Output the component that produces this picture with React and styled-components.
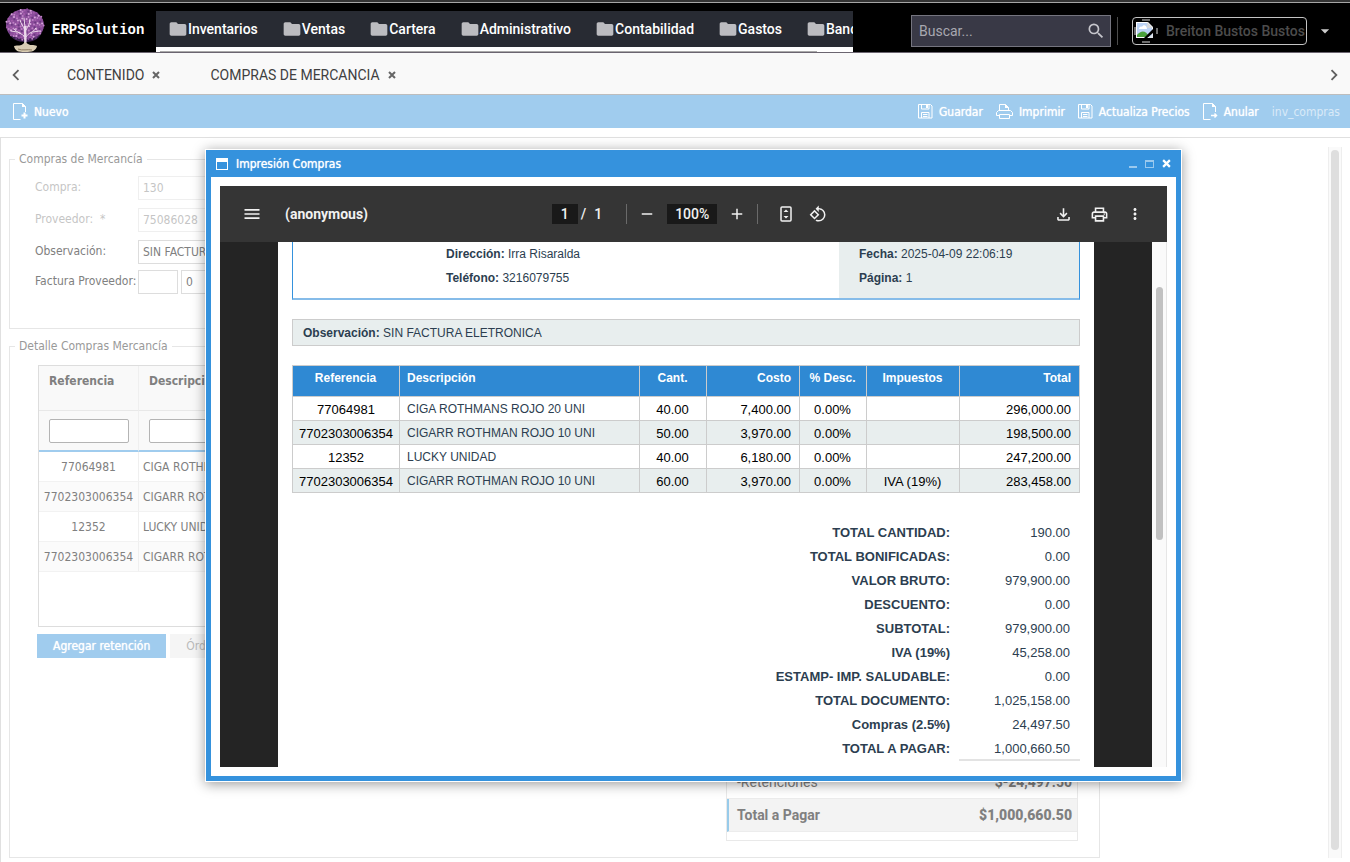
import { Fragment } from 'react';
import styled, { createGlobalStyle, css } from 'styled-components';
import {
  MdAdd,
  MdArrowDropDown,
  MdChevronLeft,
  MdChevronRight,
  MdFolder,
  MdMenu,
  MdMoreVert,
  MdOutlineFileDownload,
  MdOutlinePrint,
  MdRemove,
  MdRotate90DegreesCcw,
  MdSearch,
} from 'react-icons/md';

const uiFont = '"DejaVu Sans Condensed", "DejaVu Sans", sans-serif';
const menus = ['Inventarios', 'Ventas', 'Cartera', 'Administrativo', 'Contabilidad', 'Gastos', 'Bancos'];
const tabs = ['CONTENIDO', 'COMPRAS DE MERCANCIA'];

const items = [
  { ref: '77064981', name: 'CIGA ROTHMANS ROJO 20 UNI', qty: '40.00', cost: '7,400.00', tax: '', total: '296,000.00' },
  { ref: '7702303006354', name: 'CIGARR ROTHMAN ROJO 10 UNI', qty: '50.00', cost: '3,970.00', tax: '', total: '198,500.00' },
  { ref: '12352', name: 'LUCKY UNIDAD', qty: '40.00', cost: '6,180.00', tax: '', total: '247,200.00' },
  { ref: '7702303006354', name: 'CIGARR ROTHMAN ROJO 10 UNI', qty: '60.00', cost: '3,970.00', tax: 'IVA (19%)', total: '283,458.00' },
];

const totals = [
  ['TOTAL CANTIDAD:', '190.00'],
  ['TOTAL BONIFICADAS:', '0.00'],
  ['VALOR BRUTO:', '979,900.00'],
  ['DESCUENTO:', '0.00'],
  ['SUBTOTAL:', '979,900.00'],
  ['IVA (19%)', '45,258.00'],
  ['ESTAMP- IMP. SALUDABLE:', '0.00'],
  ['TOTAL DOCUMENTO:', '1,025,158.00'],
  ['Compras (2.5%)', '24,497.50'],
  ['TOTAL A PAGAR:', '1,000,660.50'],
];

// leaves are spread on a spiral so the crown keeps an even density
const leaves = Array.from({ length: 150 }, (_, i) => {
  const angle = i * 2.4;
  const dist = Math.sqrt(i / 150);
  return {
    x: 20 + Math.cos(angle) * dist * 19,
    y: 17 + Math.sin(angle) * dist * 16,
    fill: ['#a45bab', '#d9a6dc', '#8d4a9c', '#c07fc6', '#6c3780'][(i * 7) % 5],
  };
});

function TreeLogo() {
  return (
    <svg width="40" height="44" viewBox="0 0 40 44" aria-hidden="true">
      <ellipse cx="20" cy="17" rx="19" ry="16" fill="#8a4f9a" />
      <path d="M3 24c5 9 29 9 34 0-3 8-10 10-17 10S6 31 3 24z" fill="#3c2350" />
      {leaves.map((leaf, i) => (
        <circle key={i} cx={leaf.x} cy={leaf.y} r="1" fill={leaf.fill} />
      ))}
      <g fill="none" stroke="#ecd9ea" strokeLinecap="round">
        <path d="M20 38c1-6 0-13 0-19" strokeWidth="2.4" />
        <path d="M20 29c-3-4-8-4-11-8M21 29c3-5 7-4 10-9M20 22c-2-4-4-6-5-10M21 22c2-4 4-6 4-11M12 24l-6-1M28 24l6-1M20 19l-1-9" />
      </g>
      <path d="M9 38c4-1 7 0 9-2l2-2 3 2c3 2 5 0 9 2-1 5-5 6-12 6S10 43 9 38z" fill="#d9cdb4" />
      <path d="M13 41c4 2 10 0 14 1" stroke="#8e7c60" fill="none" />
    </svg>
  );
}

function BrokenAvatar() {
  return (
    <svg width="24" height="24" viewBox="0 0 24 24" aria-hidden="true">
      <path d="M2 3h12l5 5v11H2z" fill="#fff" />
      <path d="M3 4h10v5h5v9H3z" fill="#bcd3f5" />
      <path d="M5 10c0-2 2-3 3-2 1-3 5-2 5 2z" fill="#fff" />
      <path d="M3 18v-2c4-5 9-5 12 2z" fill="#4aa13c" />
      <path d="M13 3v6h6z" fill="#d5d8dc" />
      <path d="M19 10v4l-7 6H9z" fill="#000" />
      <path d="M14 19l5-4v4z" fill="#dfe4ea" />
      <path d="M8 1h8M8 23h8M1 8v8M23 9v6" stroke="#ddd" fill="none" />
    </svg>
  );
}

function NewDocIcon({ arrow }) {
  return (
    <svg width="15" height="17" viewBox="0 0 15 17" fill="none" stroke="currentColor" aria-hidden="true">
      <path d="M7.500 16.500H.5V.5h9l3 3V9" />
      <path d="M9 0l4 4H9z" fill="currentColor" stroke="none" />
      {arrow ? (
        <path d="M8 12.500h5M11.500 10.500l2 2-2 2" strokeWidth="1.500" />
      ) : (
        <path d="M11.500 9.500v6M8.500 12.500h6" strokeWidth="2" />
      )}
    </svg>
  );
}

function SaveIcon() {
  return (
    <svg width="15" height="15" viewBox="0 0 15 15" fill="none" stroke="currentColor" aria-hidden="true">
      <path d="M.5.5h12l1.500 1.500v12H.5zM3.500.5v4.500h7.500V.5M3.500 14V8.500h7.500V14M5 10.500h4.500M5 12.500h4.500" />
      <path d="M8 1h2v3H8z" fill="currentColor" stroke="none" />
    </svg>
  );
}

function PrintIcon() {
  return (
    <svg width="17" height="15" viewBox="0 0 17 15" fill="none" stroke="currentColor" aria-hidden="true">
      <path d="M3.500 7V.5h6l3 3V7M3.500 11.500h-3v-3l2-2h12l2 2v3h-3M3.500 10.500h10v4h-10z" />
      <path d="M9 0l4 4H9z" fill="currentColor" stroke="none" />
    </svg>
  );
}

function FitIcon() {
  return (
    <svg width="12" height="16" viewBox="0 0 12 16" aria-hidden="true">
      <rect x="1" y="1" width="10" height="14" rx="1" fill="none" stroke="currentColor" strokeWidth="1.500" />
      <path d="M6 3.500l2.500 2.500h-5zM6 12.500L3.500 10h5z" fill="currentColor" />
    </svg>
  );
}

function CloseMark({ size = 8 }) {
  return (
    <svg width={size} height={size} viewBox="0 0 8 8" aria-hidden="true">
      <path d="M1 1l6 6M7 1L1 7" stroke="currentColor" strokeWidth="2" />
    </svg>
  );
}

function App() {
  return (
    <>
      <GlobalStyle />
      <Page>
        <Header>
          <Brand href="#">
            <TreeLogo />
            ERPSolution
          </Brand>
          <NavScroller>
            <Nav>
              {menus.map((menu) => (
                <NavLink href="#" key={menu}>
                  <MdFolder size={20} />
                  {menu}
                </NavLink>
              ))}
            </Nav>
            <NavTrack>
              <NavThumb />
            </NavTrack>
          </NavScroller>
          <SearchBox>
            <input type="text" placeholder="Buscar..." aria-label="Buscar" />
            <MdSearch size={20} />
          </SearchBox>
          <UserArea>
            <UserButton type="button">
              <BrokenAvatar />
              <span>Breiton Bustos Bustos</span>
            </UserButton>
            <CaretButton type="button" aria-label="Abrir menú de usuario">
              <MdArrowDropDown size={20} />
            </CaretButton>
          </UserArea>
        </Header>

        <TabBar>
          <ArrowButton type="button" aria-label="Anterior">
            <MdChevronLeft size={22} />
          </ArrowButton>
          {tabs.map((tab) => (
            <Tab key={tab}>
              <button type="button">{tab}</button>
              <button type="button" aria-label={`Cerrar ${tab}`}>
                <CloseMark />
              </button>
            </Tab>
          ))}
          <ArrowButton type="button" aria-label="Siguiente" $last>
            <MdChevronRight size={22} />
          </ArrowButton>
        </TabBar>

        <Toolbar>
          <ToolButton type="button">
            <NewDocIcon />
            Nuevo
          </ToolButton>
          <ToolGroup>
            <ToolButton type="button">
              <SaveIcon />
              Guardar
            </ToolButton>
            <ToolButton type="button">
              <PrintIcon />
              Imprimir
            </ToolButton>
            <ToolButton type="button">
              <SaveIcon />
              Actualiza Precios
            </ToolButton>
            <ToolButton type="button">
              <NewDocIcon arrow />
              Anular
            </ToolButton>
            <ModuleName>inv_compras</ModuleName>
          </ToolGroup>
        </Toolbar>

        <Body>
          <FormArea>
            <FieldSet $tall>
              <legend>Compras de Mercancía</legend>
              <FormRows>
                <FormRow $faded>
                  <label htmlFor="compra">Compra:</label>
                  <TextField id="compra" defaultValue="130" disabled />
                </FormRow>
                <FormRow $faded>
                  <label htmlFor="proveedor">Proveedor: &nbsp;*</label>
                  <TextField id="proveedor" defaultValue="75086028" disabled />
                </FormRow>
                <FormRow>
                  <label htmlFor="observacion">Observación:</label>
                  <TextField id="observacion" defaultValue="SIN FACTURA ELETRONICA" />
                </FormRow>
                <FormRow>
                  <label htmlFor="factura">Factura Proveedor:</label>
                  <TextField id="factura" $small />
                  <TextField aria-label="Número de factura" defaultValue="0" />
                </FormRow>
              </FormRows>
            </FieldSet>

            <FieldSet>
              <legend>Detalle Compras Mercancía</legend>
              <GridBox>
                <GridTable>
                  <colgroup>
                    <col className="ref" />
                    <col />
                  </colgroup>
                  <thead>
                    <tr>
                      <th>Referencia</th>
                      <th>Descripción</th>
                    </tr>
                    <tr className="filters">
                      <td>
                        <input type="text" aria-label="Filtrar referencia" />
                      </td>
                      <td>
                        <input type="text" aria-label="Filtrar descripción" />
                      </td>
                    </tr>
                  </thead>
                  <tbody>
                    {items.map((item, i) => (
                      <tr key={i}>
                        <td className="ref">{item.ref}</td>
                        <td>{item.name}</td>
                      </tr>
                    ))}
                  </tbody>
                </GridTable>
              </GridBox>
              <Actions>
                <ActionButton type="button" $primary>Agregar retención</ActionButton>
                <ActionButton type="button">Órdenes</ActionButton>
              </Actions>
              <Summary>
                <SummaryRow>
                  <span>-Retenciones</span>
                  <strong>$-24,497.50</strong>
                </SummaryRow>
                <SummaryRow $total>
                  <span>Total a Pagar</span>
                  <strong>$1,000,660.50</strong>
                </SummaryRow>
              </Summary>
            </FieldSet>
          </FormArea>
          <PageScroll>
            <div />
          </PageScroll>
        </Body>

        <Dialog role="dialog" aria-labelledby="dialog-title">
          <DialogHeader>
            <WindowMark />
            <h2 id="dialog-title">Impresión Compras</h2>
            <DialogButton type="button" aria-label="Minimizar" $dim>
              <MinimizeMark />
            </DialogButton>
            <DialogButton type="button" aria-label="Maximizar" $dim>
              <MaximizeMark />
            </DialogButton>
            <DialogButton type="button" aria-label="Cerrar">
              <CloseMark size={9} />
            </DialogButton>
          </DialogHeader>
          <Viewer>
            <ViewerBar>
              <ViewerGroup>
                <ViewerButton type="button" aria-label="Menú">
                  <MdMenu size={20} />
                </ViewerButton>
                <strong>(anonymous)</strong>
              </ViewerGroup>
              <ViewerGroup $center>
                <ViewerInput $width={26} aria-label="Página" defaultValue="1" />
                <PageCount>
                  <span>/</span>
                  <span>1</span>
                </PageCount>
                <Separator />
                <ViewerButton type="button" aria-label="Alejar">
                  <MdRemove size={18} />
                </ViewerButton>
                <ViewerInput $width={50} aria-label="Zoom" defaultValue="100%" />
                <ViewerButton type="button" aria-label="Acercar">
                  <MdAdd size={18} />
                </ViewerButton>
                <Separator />
                <ViewTools>
                  <ViewerButton type="button" aria-label="Ajustar a la página">
                    <FitIcon />
                  </ViewerButton>
                  <ViewerButton type="button" aria-label="Girar">
                    <MdRotate90DegreesCcw size={18} />
                  </ViewerButton>
                </ViewTools>
              </ViewerGroup>
              <ViewerGroup $end>
                <ViewerButton type="button" aria-label="Descargar">
                  <MdOutlineFileDownload size={19} />
                </ViewerButton>
                <ViewerButton type="button" aria-label="Imprimir">
                  <MdOutlinePrint size={19} />
                </ViewerButton>
                <ViewerButton type="button" aria-label="Más opciones">
                  <MdMoreVert size={18} />
                </ViewerButton>
              </ViewerGroup>
            </ViewerBar>
            <ViewerBody>
              <Paper>
                <DocHeader>
                  <DocInfo>
                    <p><b>Dirección:</b> Irra Risaralda</p>
                    <p><b>Teléfono:</b> 3216079755</p>
                  </DocInfo>
                  <DocMeta>
                    <p><b>Fecha:</b> 2025-04-09 22:06:19</p>
                    <p><b>Página:</b> 1</p>
                  </DocMeta>
                </DocHeader>
                <DocNote><b>Observación:</b> SIN FACTURA ELETRONICA</DocNote>
                <DocTable>
                  <colgroup>
                    <col width="107" />
                    <col />
                    <col width="67" />
                    <col width="93" />
                    <col width="67" />
                    <col width="93" />
                    <col width="120" />
                  </colgroup>
                  <thead>
                    <tr>
                      <th>Referencia</th>
                      <th className="left">Descripción</th>
                      <th>Cant.</th>
                      <th className="right">Costo</th>
                      <th>% Desc.</th>
                      <th>Impuestos</th>
                      <th className="right">Total</th>
                    </tr>
                  </thead>
                  <tbody>
                    {items.map((item, i) => (
                      <tr key={i}>
                        <td className="code">{item.ref}</td>
                        <td className="left">{item.name}</td>
                        <td>{item.qty}</td>
                        <td className="right">{item.cost}</td>
                        <td>0.00%</td>
                        <td>{item.tax}</td>
                        <td className="right">{item.total}</td>
                      </tr>
                    ))}
                  </tbody>
                </DocTable>
                <DocTotals>
                  {totals.map(([label, value]) => (
                    <Fragment key={label}>
                      <dt>{label}</dt>
                      <dd>{value}</dd>
                    </Fragment>
                  ))}
                </DocTotals>
              </Paper>
              <ViewerScroll>
                <div />
              </ViewerScroll>
            </ViewerBody>
          </Viewer>
        </Dialog>
      </Page>
    </>
  );
}

const GlobalStyle = createGlobalStyle`
  * {
    box-sizing: border-box;
  }
  body {
    margin: 0;
    background: #fff;
    font-family: ${uiFont};
    font-size: 12px;
    color: #808080;
  }
  button {
    display: flex;
    align-items: center;
    padding: 0;
    border: 0;
    background: none;
    color: inherit;
    font: inherit;
  }
  input {
    font: inherit;
    color: inherit;
    min-width: 0;
  }
  svg {
    flex: none;
  }
`;

const Page = styled.div`
  position: relative;
  display: flex;
  flex-direction: column;
  min-height: 100vh;
  overflow: hidden;
`;

const Header = styled.header`
  display: flex;
  align-items: center;
  height: 53px;
  padding-top: 8px;
  background: #000;
  border-top: 2px solid #333;
  border-bottom: 1px solid #6b6570;
  box-shadow: inset 0 1px #a5a5a5;
  font-family: Roboto, sans-serif;
  font-size: 14px;
`;

const Brand = styled.a`
  display: flex;
  align-items: center;
  align-self: flex-end;
  gap: 7px;
  flex: 0 0 156px;
  padding-left: 5px;
  color: #fff;
  font: bold 14px "Liberation Mono", monospace;
  text-decoration: none;
`;

const NavScroller = styled.div`
  flex: 1;
  min-width: 0;
  align-self: flex-end;
  margin-right: 58px;
  background: #fff;
`;

const Nav = styled.nav`
  display: flex;
  gap: 24px;
  height: 36px;
  padding-left: 12px;
  overflow: hidden;
  background: #282b33;
`;

const NavLink = styled.a`
  display: flex;
  align-items: center;
  color: #fff;
  font-weight: 500;
  text-decoration: none;
  svg {
    color: #bcbcc0;
  }
`;

const NavTrack = styled.div`
  height: 5px;
  padding: 4px 36px 0 4px;
`;

const NavThumb = styled.div`
  height: 1px;
  background: #aaa;
`;

const SearchBox = styled.label`
  display: flex;
  align-items: center;
  flex: 0 0 200px;
  min-width: 0;
  height: 32px;
  padding: 0 4px 0 7px;
  border: 1px solid #75757f;
  background: #393946;
  color: #c5c5cb;
  input {
    flex: 1;
    padding: 0;
    border: 0;
    outline: 0;
    background: none;
    &::placeholder {
      color: #a8a8b0;
      opacity: 1;
    }
  }
`;

const UserArea = styled.div`
  display: flex;
  align-items: center;
  height: 28px;
  margin-left: 6px;
  padding: 0 15px 0 14px;
  border-left: 1px solid #4c4c4c;
`;

const UserButton = styled.button`
  && {
    gap: 8px;
    width: 175px;
    height: 28px;
    padding-left: 1px;
    border: 1px solid #c4c4c4;
    border-radius: 4px;
    color: #4c4c4c;
    font-weight: 500;
    white-space: nowrap;
    overflow: hidden;
  }
`;

const CaretButton = styled.button`
  && {
    margin-left: 8px;
    color: #ccc;
  }
`;

const TabBar = styled.div`
  display: flex;
  align-items: center;
  height: 42px;
  padding: 2px 5px 0;
  background: #f9f9f9;
  border-bottom: 1px solid #bdbdbd;
  color: #404040;
  font-family: Roboto, sans-serif;
  font-size: 14px;
`;

const ArrowButton = styled.button`
  && {
    margin-left: ${({ $last }) => ($last ? 'auto' : 0)};
    color: #606060;
  }
`;

const Tab = styled.div`
  display: flex;
  align-items: center;
  gap: 8px;
  margin-left: 40px;
  & + & {
    margin-left: 50px;
  }
  svg {
    color: #666;
  }
`;

const Toolbar = styled.div`
  display: flex;
  align-items: center;
  justify-content: space-between;
  height: 33px;
  padding: 0 10px 0 13px;
  background: #a0ccee;
  color: #fff;
`;

const ToolGroup = styled.div`
  display: flex;
  align-items: center;
  gap: 13px;
`;

const ToolButton = styled.button`
  && {
    gap: 6px;
    text-shadow: 0 0 1px #fff;
  }
`;

const ModuleName = styled.span`
  opacity: 0.6;
`;

const Body = styled.main`
  flex: 1;
  display: flex;
  justify-content: space-between;
  margin-top: 9px;
  padding: 9px 8px 5px;
  border-top: 1px solid #e0e0e0;
  border-left: 1px solid #e0e0e0;
`;

const FormArea = styled.div`
  flex: 0 1 1091px;
  min-width: 0;
  padding-top: 4px;
`;

const FieldSet = styled.fieldset`
  min-width: 0;
  margin: 0 0 9px;
  padding: 0 21px 16px 27px;
  border: 1px solid #e6e6e6;
  legend {
    margin-left: -22px;
    padding: 0 4px;
    line-height: 16px;
    color: #999;
  }
  ${({ $tall }) =>
    $tall &&
    css`
      padding-bottom: 34px;
    `}
  &:last-child {
    margin: 0;
  }
`;

const FormRows = styled.div`
  display: flex;
  flex-direction: column;
  gap: 8px;
  padding-top: 9px;
  margin-left: -2px;
`;

const FormRow = styled.div`
  display: flex;
  gap: 3px;
  width: 400px;
  opacity: ${({ $faded }) => ($faded ? 0.45 : 1)};
  label {
    width: 100px;
    line-height: 22px;
    white-space: nowrap;
  }
  &:last-child {
    margin-top: -2px;
  }
`;

const TextField = styled.input.attrs({ type: 'text' })`
  flex: ${({ $small }) => ($small ? '0 0 40px' : '1')};
  height: 24px;
  padding: 0 4px;
  border: 1px solid #ddd;
  background: #fff;
`;

const GridBox = styled.div`
  height: 262px;
  margin: 11px 0 0 1px;
  border: 1px solid #ddd;
`;

const GridTable = styled.table`
  width: 100%;
  table-layout: fixed;
  border-collapse: separate;
  border-spacing: 0;
  col.ref {
    width: 100px;
  }
  th {
    height: 45px;
    padding: 8px 10px;
    background: #f9f9f9;
    border-bottom: 1px solid #e8e8e8;
    text-align: left;
    vertical-align: top;
  }
  th, td {
    border-right: 1px solid #efefef;
  }
  .filters td {
    height: 41px;
    padding: 0 9px 0 10px;
    background: #f9f9f9;
    border-bottom: 2px solid #a0ccee;
  }
  .filters input {
    display: block;
    width: 100%;
    height: 24px;
    border: 1px solid #b4b4b4;
    border-radius: 2px;
    background: #fff;
  }
  tbody td {
    height: 30px;
    padding: 0 4px;
    border-bottom: 1px solid #f2f2f2;
  }
  tbody tr:nth-child(even) {
    background: #fbfbfb;
  }
  td.ref {
    text-align: center;
  }
`;

const Actions = styled.div`
  display: flex;
  gap: 4px;
  margin-top: 7px;
`;

const ActionButton = styled.button`
  && {
    height: 24px;
    padding: 0 16px;
    background: ${({ $primary }) => ($primary ? '#a0ccee' : '#f5f5f5')};
    color: ${({ $primary }) => ($primary ? '#fff' : '#bbb')};
    text-shadow: ${({ $primary }) => ($primary ? '0 0 1px #fff' : 'none')};
  }
`;

const Summary = styled.div`
  width: 352px;
  margin: 107px 0 0 auto;
  padding-bottom: 8px;
  border: 1px solid #e9e9e9;
  font-family: Roboto, sans-serif;
  font-size: 14px;
`;

const SummaryRow = styled.div`
  display: flex;
  align-items: center;
  justify-content: space-between;
  height: 33px;
  padding: 0 5px 0 10px;
  border-bottom: 1px solid #ececec;
  ${({ $total }) =>
    $total &&
    css`
      padding-left: 8px;
      border-left: 2px solid #98cbea;
      background: #f3f3f3;
      font-weight: bold;
    `}
`;

const PageScroll = styled.div`
  display: flex;
  justify-content: center;
  width: 14px;
  padding: 3px 0 8px;
  border-left: 1px solid #eee;
  border-right: 1px solid #eee;
  background: #fafafa;
  div {
    width: 8px;
    border-radius: 4px;
    background: #dedede;
  }
`;

const Dialog = styled.section`
  position: absolute;
  top: 149px;
  left: 205px;
  right: 168px;
  padding: 0 5px 5px;
  border: 1px solid #fff;
  background: #3592dd;
  box-shadow: 0 2px 12px rgba(0, 0, 0, 0.4);
`;

const DialogHeader = styled.header`
  display: flex;
  align-items: center;
  gap: 8px;
  height: 27px;
  padding: 0 5px;
  color: #fff;
  h2 {
    flex: 1;
    margin: 0;
    font-size: 12px;
    font-weight: normal;
    text-shadow: 0 0 1px #fff;
  }
`;

const WindowMark = styled.span`
  width: 12px;
  height: 12px;
  border: 1px solid #fff;
  border-top-width: 4px;
`;

const DialogButton = styled.button`
  && {
    opacity: ${({ $dim }) => ($dim ? 0.5 : 1)};
  }
`;

const MinimizeMark = styled.span`
  width: 8px;
  height: 8px;
  border-bottom: 2px solid #fff;
`;

const MaximizeMark = styled.span`
  width: 9px;
  height: 8px;
  border: 1px solid #fff;
  border-top-width: 2px;
`;

const Viewer = styled.div`
  padding: 9px;
  background: #fff;
`;

const ViewerBar = styled.div`
  display: grid;
  grid-template-columns: 1fr auto 1fr;
  align-items: center;
  height: 56px;
  padding: 0 23px 0 22px;
  background: #353535;
  color: #f1f1f1;
  font-family: Roboto, sans-serif;
  font-size: 14px;
  font-weight: 500;
`;

const ViewerGroup = styled.div`
  display: flex;
  align-items: center;
  gap: ${({ $end }) => ($end ? 17 : 23)}px;
  ${({ $center }) =>
    $center &&
    css`
      gap: 11px;
      margin-right: 7px;
    `}
  ${({ $end }) => $end && 'justify-content: flex-end;'}
`;

const ViewTools = styled.div`
  display: flex;
  gap: 14px;
  margin-left: 8px;
`;

const ViewerButton = styled.button`
  && {
    justify-content: center;
    min-width: 18px;
  }
`;

const ViewerInput = styled.input.attrs({ type: 'text' })`
  width: ${({ $width }) => $width}px;
  height: 20px;
  padding: 0;
  border: 0;
  background: #191919;
  text-align: center;
`;

const PageCount = styled.span`
  display: flex;
  gap: 8px;
  margin: 0 13px 0 -8px;
`;

const Separator = styled.span`
  width: 1px;
  height: 20px;
  background: #6a6a6a;
`;

const ViewerBody = styled.div`
  display: flex;
  height: 525px;
  background: #242424;
`;

const Paper = styled.article`
  flex: 1;
  min-width: 0;
  margin: 0 58px;
  padding: 0 14px;
  background: #fff;
  color: #2c3e50;
  font-family: "Liberation Sans", Arial, sans-serif;
  font-size: 12px;
`;

const DocHeader = styled.div`
  display: flex;
  justify-content: space-between;
  height: 58px;
  border: 1px solid #3592dd;
  border-top: 0;
  border-bottom: 2px solid #86bce9;
  p {
    margin: 0;
    line-height: 24px;
  }
`;

const DocInfo = styled.div`
  padding-left: 153px;
`;

const DocMeta = styled.div`
  width: 240px;
  padding-left: 20px;
  background: #e8eeee;
`;

const DocNote = styled.p`
  margin: 19px 0;
  padding: 1px 10px 0;
  border: 1px solid #ccc;
  background: #e8eeee;
  line-height: 24px;
`;

const DocTable = styled.table`
  width: 100%;
  table-layout: fixed;
  border-collapse: collapse;
  text-align: center;
  th, td {
    padding: 0 8px 0 7px;
    border: 1px solid #ccc;
  }
  th {
    height: 31px;
    padding-bottom: 6px;
    background: #2f89d3;
    color: #fff;
  }
  td {
    height: 24px;
    padding-top: 2px;
    color: #000;
    font-size: 13px;
  }
  tbody tr:nth-child(even) {
    background: #e8eeee;
  }
  td.code {
    padding-left: 0;
    padding-right: 0;
  }
  .left {
    text-align: left;
  }
  td.left {
    padding-top: 0;
    color: #2c3e50;
    font-size: 12px;
  }
  .right {
    text-align: right;
  }
`;

const DocTotals = styled.dl`
  display: grid;
  grid-template-columns: 1fr 121px;
  margin: 28px 0 0;
  font-size: 13px;
  line-height: 24px;
  text-align: right;
  dt {
    padding-right: 9px;
    font-weight: bold;
  }
  dd {
    margin: 0;
    padding-right: 10px;
  }
  dd:last-child {
    height: 24px;
    border-bottom: 2px solid #e3e3e3;
  }
`;

const ViewerScroll = styled.div`
  width: 15px;
  padding: 45px 3px 0 4px;
  background: #fafafa;
  border-right: 1px solid #e6e6e6;
  div {
    height: 253px;
    border-radius: 4px;
    background: #c1c1c1;
  }
`;

export default App;
